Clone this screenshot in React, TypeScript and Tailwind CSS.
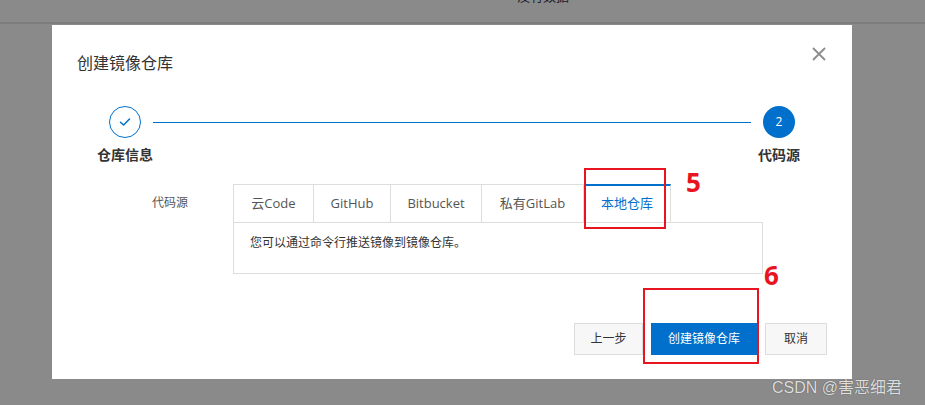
import React from "react";

const font = { fontFamily: '"Open Sans", "Noto Sans CJK SC", sans-serif' };

function Tab({ label, w, active }: { label: string; w: string; active?: boolean }) {
  return (
    <div
      className={
        "flex h-[38px] items-center justify-center border-r border-[#dddddd] bg-white text-[13px] " +
        w +
        (active ? " border-t-2 border-t-[#0070cc] text-[#0070cc]" : " border-t border-t-[#dddddd] text-[#555555]")
      }
    >
      {label}
    </div>
  );
}

export default function App() {
  return (
    <div className="relative h-[405px] w-[925px] overflow-hidden bg-[#8a8a8a]" style={font}>
      {/* top strip behind overlay */}
      <div className="flex h-[24px] items-start border-b-2 border-[#7c7c7c] bg-[#8a8a8a]">
        <div className="ml-[517px] mt-[-12px] text-[13px] leading-[16px] text-[#1a1a2a]">没有数据</div>
      </div>

      {/* modal */}
      <div className="relative ml-[52px] mt-[1px] flex h-[354px] w-[800px] flex-col bg-white">
        <div className="flex items-start justify-between pl-[25px] pr-[26px] pt-[22px]">
          <div className="mt-[4px] text-[16px] leading-[24px] text-[#333333]">创建镜像仓库</div>
          <svg width="14" height="14" viewBox="0 0 14 14" className="shrink-0">
            <path d="M1 1L13 13M13 1L1 13" stroke="#8c8c8c" strokeWidth="1.8" fill="none" />
          </svg>
        </div>

        {/* steps */}
        <div className="mt-[31px] flex px-[45px]">
          <div className="flex w-[56px] flex-col items-center">
            <div className="flex h-[32px] w-[32px] items-center justify-center rounded-full border border-[#0070cc] bg-white">
              <svg width="12" height="10" viewBox="0 0 12 10">
                <path d="M1.5 5.2L4.6 8L10.5 2" stroke="#0070cc" strokeWidth="1.5" fill="none" strokeLinecap="round" strokeLinejoin="round" />
              </svg>
            </div>
            <div className="mt-[7px] whitespace-nowrap text-[14px] font-bold leading-[20px] text-[#333333]">仓库信息</div>
          </div>
          <div className="mt-[16px] h-px flex-1 bg-[#0070cc]" />
          <div className="flex w-[56px] flex-col items-center">
            <div className="flex h-[32px] w-[32px] items-center justify-center rounded-full bg-[#0070cc] text-[12px] text-white">
              2
            </div>
            <div className="mt-[7px] whitespace-nowrap text-[14px] font-bold leading-[20px] text-[#333333]">代码源</div>
          </div>
        </div>

        {/* form row */}
        <div className="mt-[19px] flex pl-[100px]">
          <div className="mt-[9px] w-[81px] text-[12px] leading-[20px] text-[#555555]">代码源</div>
          <div className="w-[530px]">
            <div className="flex items-end">
              <div className="flex border-l border-[#dddddd]">
                <Tab label="云Code" w="w-[80px]" />
                <Tab label="GitHub" w="w-[77px]" />
                <Tab label="Bitbucket" w="w-[91px]" />
                <Tab label="私有GitLab" w="w-[102px]" />
                <Tab label="本地仓库" w="w-[87px]" active />
              </div>
            </div>
            <div className="h-[52px] border border-[#dddddd] pl-[16px] pt-[10px] text-[12px] leading-[20px] text-[#333333]">
              您可以通过命令行推送镜像到镜像仓库。
            </div>
          </div>
        </div>

        {/* footer buttons */}
        <div className="mt-[49px] flex justify-end gap-[8px] pr-[25px]">
          <button className="h-[32px] w-[69px] border border-[#dddddd] bg-[#f7f7f7] text-[12px] text-[#333333]">上一步</button>
          <button className="h-[32px] w-[106px] bg-[#0070cc] text-[12px] text-white">创建镜像仓库</button>
          <button className="h-[32px] w-[62px] border border-[#dddddd] bg-[#f7f7f7] text-[12px] text-[#333333]">取消</button>
        </div>
      </div>

      {/* red annotations */}
      <div className="absolute left-[584px] top-[168px] h-[61px] w-[82px] border-2 border-[#e8141f]" />
      <div className="absolute left-[686px] top-[166px] text-[26px] font-bold leading-[32px] text-[#e8141f]">5</div>
      <div className="absolute left-[643px] top-[288px] h-[76px] w-[116px] border-2 border-[#e8141f]" />
      <div className="absolute left-[764px] top-[259px] text-[26px] font-bold leading-[32px] text-[#e8141f]">6</div>

      {/* watermark */}
      <div
        className="absolute left-[772px] top-[376px] text-[16px] leading-[24px] text-[#dedede] [text-shadow:0_0_1px_#444]"
        style={{ fontFamily: '"Liberation Sans", "Noto Sans CJK SC", sans-serif' }}
      >
        CSDN @害恶细君
      </div>
    </div>
  );
}
